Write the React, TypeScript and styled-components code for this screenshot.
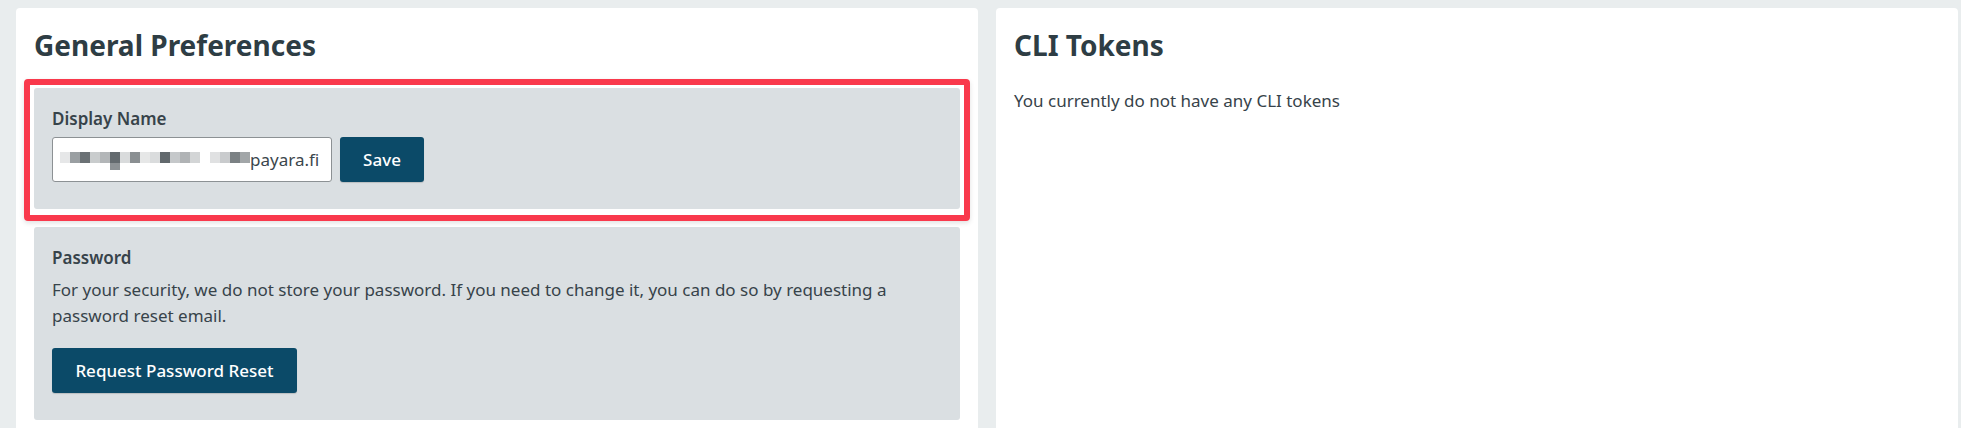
import React from "react";
import styled, { createGlobalStyle } from "styled-components";

const GlobalStyle = createGlobalStyle`
  html, body { margin: 0; padding: 0; }
  body {
    background: #e9edee;
    font-family: "Noto Sans", "Open Sans", sans-serif;
    color: #37434a;
    -webkit-font-smoothing: antialiased;
  }
`;

const Page = styled.div`
  height: 100vh;
  overflow: hidden;
  box-sizing: border-box;
  padding: 8px 3px 0 16px;
  display: grid;
  grid-template-columns: 1fr 1fr;
  column-gap: 18px;
  align-items: start;
`;

const Card = styled.section`
  background: #ffffff;
  border-radius: 4px;
  min-height: 460px;
  box-sizing: border-box;
  padding: 21px 18px 0 18px;
`;

const Title = styled.h2`
  margin: 0 0 25px 0;
  font-size: 28px;
  line-height: 1.2;
  font-weight: 700;
  color: #2e3d44;
  letter-spacing: 0;
`;

const Highlight = styled.div`
  position: relative;
  &::after {
    content: "";
    position: absolute;
    top: -9px;
    left: -10px;
    right: -10px;
    bottom: -12px;
    border: 6px solid #f9394c;
    border-radius: 4px;
    box-shadow: 0 2px 5px rgba(0, 0, 0, 0.12);
    pointer-events: none;
  }
`;

const Section = styled.div<{ $gapTop?: number }>`
  background: #dadfe2;
  border-radius: 3px;
  padding: 18px 18px 27px 18px;
  margin-top: ${(p) => p.$gapTop ?? 0}px;
`;

const Label = styled.div`
  font-size: 17px;
  line-height: 25.5px;
  font-weight: 600;
  color: #37434a;
`;

const Text = styled.p<{ $mt?: number }>`
  margin: ${(p) => p.$mt ?? 0}px 0 0 0;
  font-size: 17px;
  line-height: 26px;
  font-weight: 400;
  color: #37434a;
`;

const FieldRow = styled.div`
  display: flex;
  align-items: stretch;
  gap: 8px;
  margin-top: 6px;
`;

const InputBox = styled.div`
  width: 280px;
  height: 45px;
  box-sizing: border-box;
  background: #ffffff;
  border: 1px solid #8c9194;
  border-radius: 3px;
  display: flex;
  align-items: center;
  padding-left: 7px;
  overflow: hidden;
  white-space: nowrap;
`;

const Mosaic = styled.div`
  display: flex;
  align-items: flex-start;
  height: 18px;
  margin-top: 2px;
  flex: none;
`;

const Pixel = styled.span<{ $c: string; $low?: string }>`
  display: block;
  width: 10px;
  height: 11px;
  background: ${(p) => p.$c};
  box-shadow: ${(p) => (p.$low ? `0 7px 0 ${p.$low}` : "none")};
`;

const InputText = styled.span`
  font-size: 17px;
  color: #3b464c;
  flex: none;
`;

const Button = styled.button`
  height: 45px;
  box-sizing: border-box;
  padding: 0 22px;
  border: none;
  border-radius: 3px;
  background: #0b4a68;
  color: #ffffff;
  font-family: "Noto Sans", "Open Sans", sans-serif;
  font-size: 17px;
  font-weight: 500;
  cursor: pointer;
  box-shadow: 0 1px 1px rgba(0, 0, 0, 0.15);
`;

const SaveButton = styled(Button)`
  width: 84px;
  padding: 0;
`;

const ResetButton = styled(Button)`
  margin-top: 19px;
  width: 245px;
  padding: 0;
`;

const pixels: { c: string; low?: string }[] = [
  { c: "#e6e7e8" },
  { c: "#9a9fa2" },
  { c: "#6b7175" },
  { c: "#c9cccd" },
  { c: "#b3b6b8" },
  { c: "#636a6e", low: "#8c9194" },
  { c: "#d9dbdc" },
  { c: "#8a8f92" },
  { c: "#e6e7e7" },
  { c: "#dadcdd" },
  { c: "#62696d" },
  { c: "#c5c8ca" },
  { c: "#b0b3b5" },
  { c: "#d3d5d6" },
  { c: "#ffffff" },
  { c: "#e0e1e2" },
  { c: "#c9cbcd" },
  { c: "#7b8184" },
  { c: "#a2a6a8" },
];

export default function App() {
  return (
    <>
      <GlobalStyle />
      <Page>
        <Card>
          <Title>General Preferences</Title>
          <Highlight>
            <Section>
              <Label>Display Name</Label>
              <FieldRow>
                <InputBox>
                  <Mosaic>
                    {pixels.map((p, i) => (
                      <Pixel key={i} $c={p.c} $low={p.low} />
                    ))}
                  </Mosaic>
                  <InputText>payara.fi</InputText>
                </InputBox>
                <SaveButton>Save</SaveButton>
              </FieldRow>
            </Section>
          </Highlight>
          <Section $gapTop={18}>
            <Label>Password</Label>
            <Text $mt={6}>
              For your security, we do not store your password. If you need to change it, you can do so by requesting a
              password reset email.
            </Text>
            <ResetButton>Request Password Reset</ResetButton>
          </Section>
        </Card>
        <Card>
          <Title>CLI Tokens</Title>
          <Text>You currently do not have any CLI tokens</Text>
        </Card>
      </Page>
    </>
  );
}
